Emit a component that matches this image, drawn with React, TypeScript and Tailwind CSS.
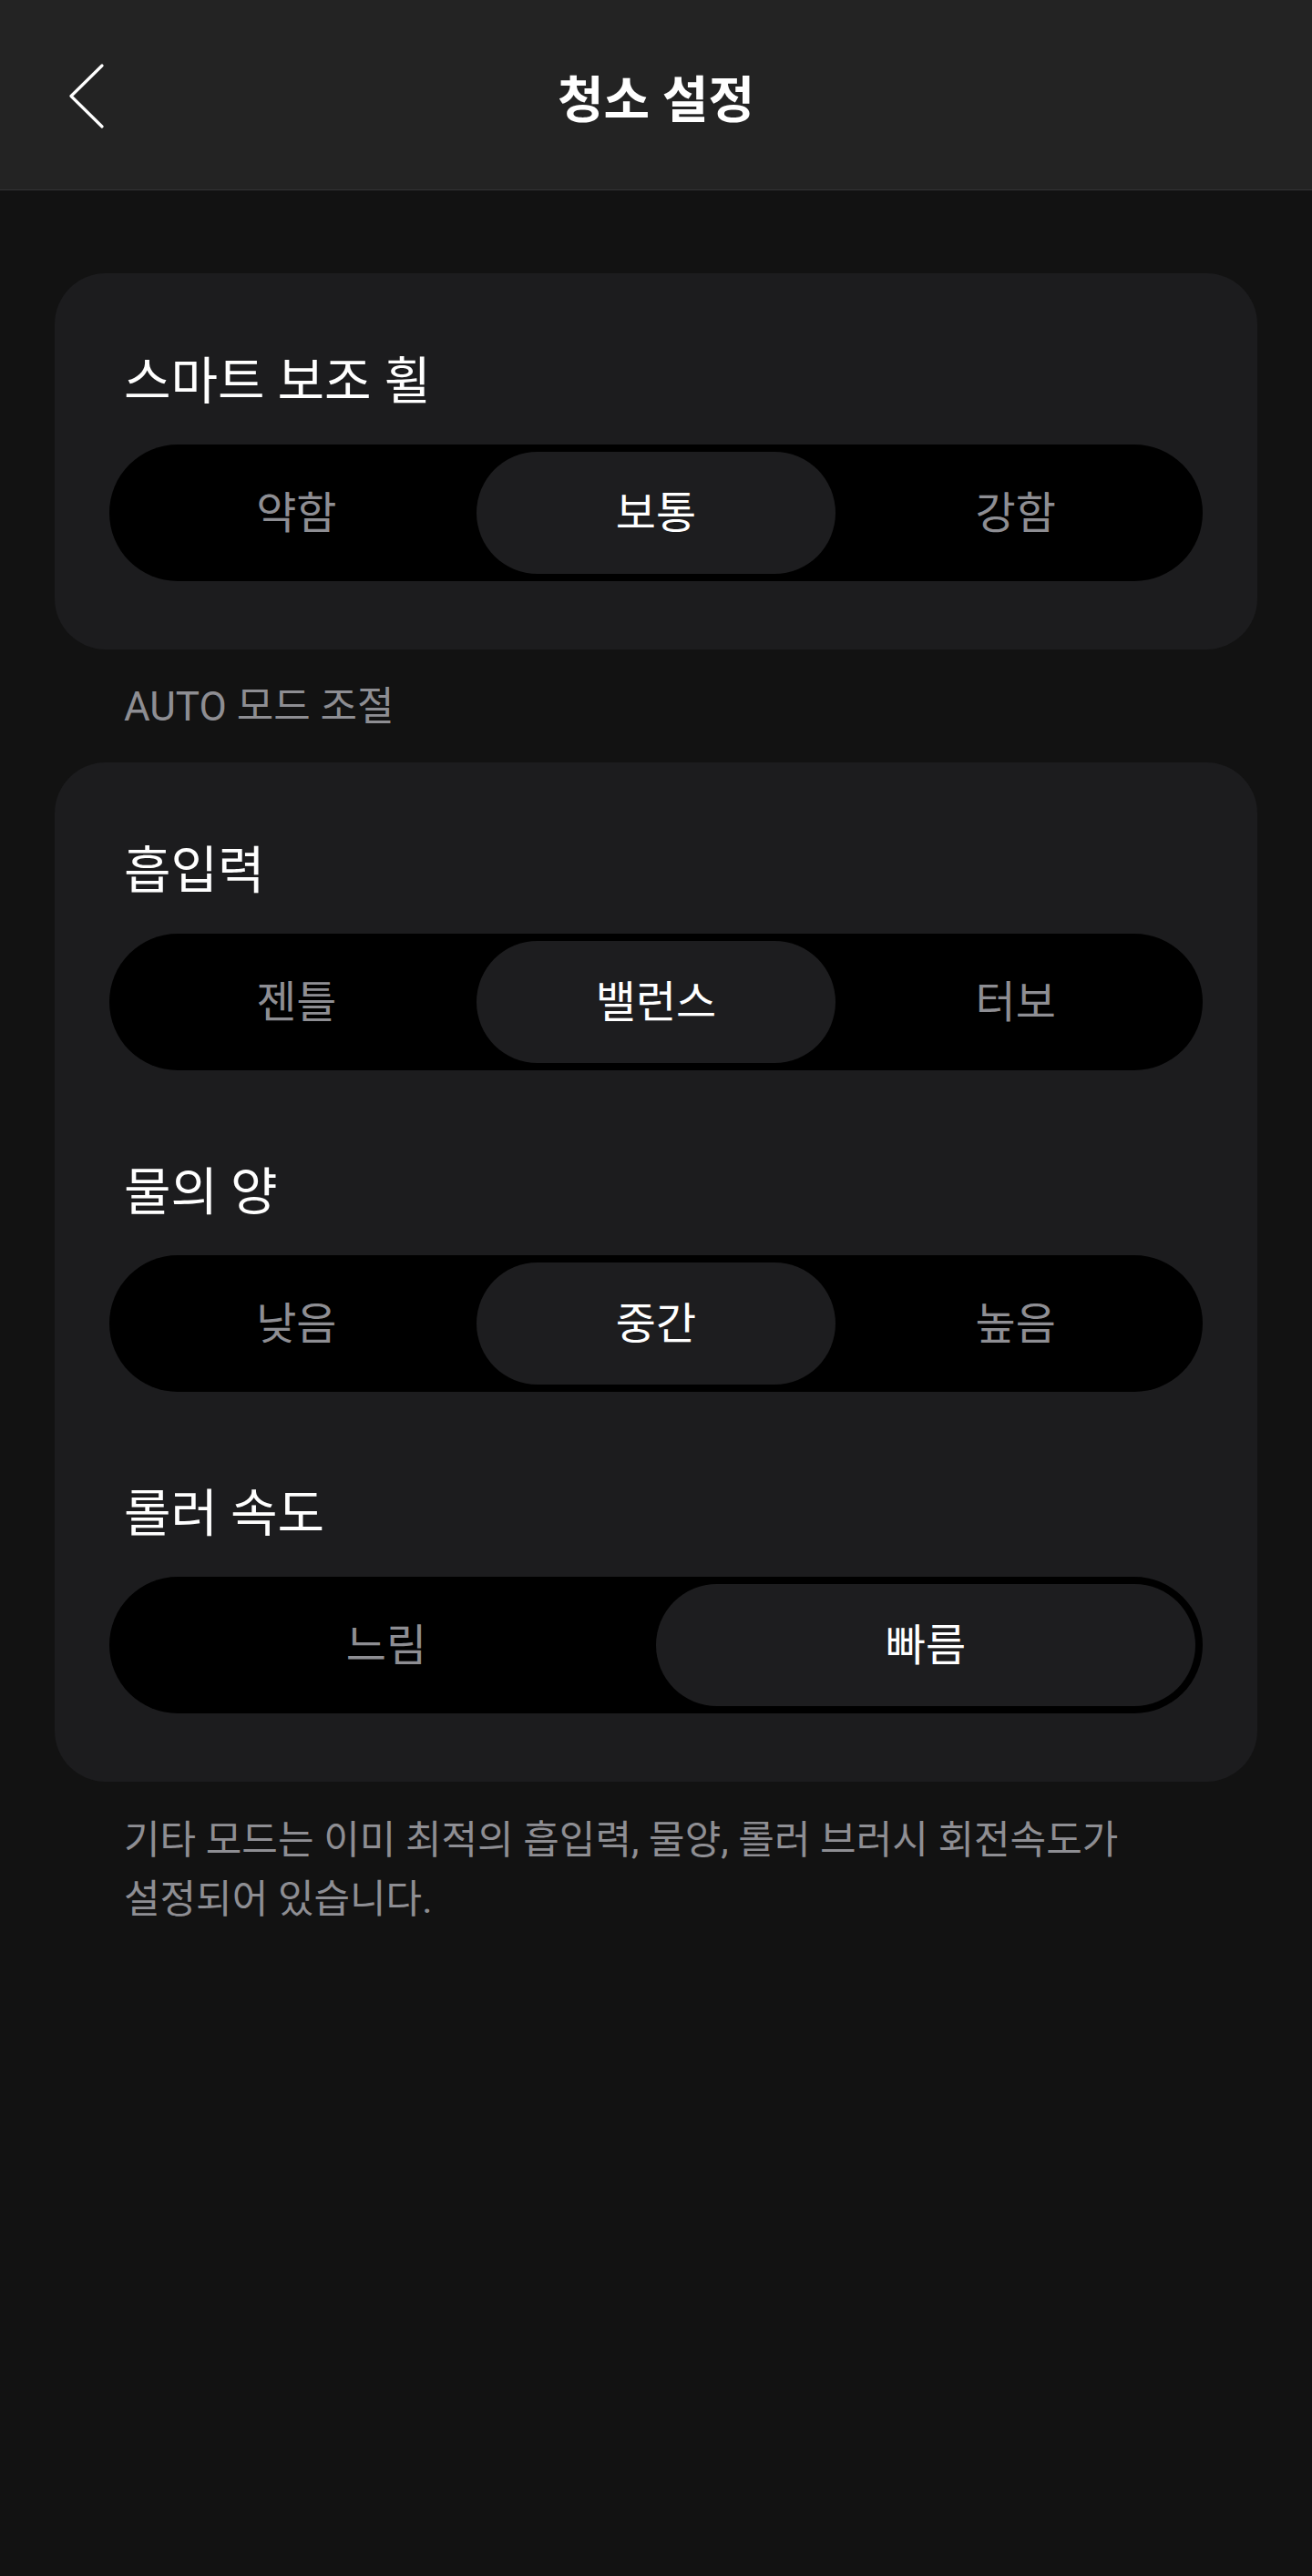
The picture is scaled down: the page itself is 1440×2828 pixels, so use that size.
import React, { useState } from 'react';

type Option = { id: string; label: string };

const FONT = "font-[Roboto,'Noto_Sans_CJK_KR',sans-serif]";

// back chevron in the header
const BackIcon = () => (
  <svg width="40" height="72" viewBox="0 0 40 72" fill="none" className="block">
    <polyline points="36,3 2,36.5 36,70" stroke="#ffffff" strokeWidth="3.2" strokeLinecap="round" strokeLinejoin="round" />
  </svg>
);

const Segmented = ({ options, value, onChange }: { options: Option[]; value: string; onChange: (id: string) => void }) => (
  <div className="flex h-[150px] rounded-full bg-black p-2">
    {options.map(opt => {
      const active = opt.id === value;
      return (
        <button
          key={opt.id}
          onClick={() => onChange(opt.id)}
          className={`flex-1 rounded-full pt-[2px] text-[48px] leading-none ${active ? 'bg-[#1d1d1f] text-white' : 'bg-transparent text-[#8e8e93]'}`}
        >
          {opt.label}
        </button>
      );
    })}
  </div>
);

const Group = ({ title, options, initial, first }: { title: string; options: Option[]; initial: string; first?: boolean }) => {
  const [value, setValue] = useState(initial);
  return (
    <div className={first ? '' : 'mt-[104px]'}>
      <h3 className="ml-4 mb-[39px] text-[56px] leading-[60px] font-normal text-white">{title}</h3>
      <Segmented options={options} value={value} onChange={setValue} />
    </div>
  );
};

const App = () => {
  return (
    <div className={`min-h-screen bg-[#121212] ${FONT}`}>
      <header className="relative flex h-[209px] items-center justify-center border-b border-[#333335] bg-[#232323] pt-[12px]">
        <button className="absolute left-[76px] top-[69px]">
          <BackIcon />
        </button>
        <h1 className="text-[55px] leading-none font-bold text-white">청소 설정</h1>
      </header>

      <main className="px-[60px] pt-[91px]">
        <section className="rounded-[56px] bg-[#1c1c1e] px-[60px] pt-[89px] pb-[75px]">
          <Group
            first
            title="스마트 보조 휠"
            initial="normal"
            options={[
              { id: 'weak', label: '약함' },
              { id: 'normal', label: '보통' },
              { id: 'strong', label: '강함' },
            ]}
          />
        </section>

        <p className="ml-[76px] mt-[33px] mb-[31px] text-[44px] leading-[60px] text-[#8e8e93]">AUTO 모드 조절</p>

        <section className="rounded-[56px] bg-[#1c1c1e] px-[60px] pt-[89px] pb-[75px]">
          <Group
            first
            title="흡입력"
            initial="balance"
            options={[
              { id: 'gentle', label: '젠틀' },
              { id: 'balance', label: '밸런스' },
              { id: 'turbo', label: '터보' },
            ]}
          />
          <Group
            title="물의 양"
            initial="mid"
            options={[
              { id: 'low', label: '낮음' },
              { id: 'mid', label: '중간' },
              { id: 'high', label: '높음' },
            ]}
          />
          <Group
            title="롤러 속도"
            initial="fast"
            options={[
              { id: 'slow', label: '느림' },
              { id: 'fast', label: '빠름' },
            ]}
          />
        </section>

        <p className="ml-[76px] mt-[32px] text-[43px] leading-[65px] text-[#8e8e93]">
          기타 모드는 이미 최적의 흡입력, 물양, 롤러 브러시 회전속도가
          <br />
          설정되어 있습니다.
        </p>
      </main>
    </div>
  );
};

export default App;
